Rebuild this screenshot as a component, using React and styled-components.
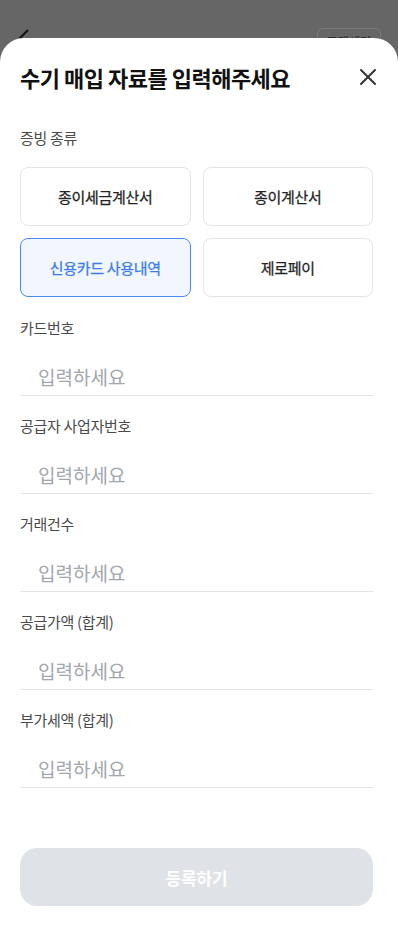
import React, { useState } from 'react';
import styled, { createGlobalStyle } from 'styled-components';

const GlobalStyle = createGlobalStyle`
  * { box-sizing: border-box; }
  body {
    margin: 0;
    font-family: "Noto Sans CJK KR", "Noto Sans", sans-serif;
    background: #666;
  }
`;

const Screen = styled.div`
  width: 398px;
  height: 946px;
  display: flex;
  flex-direction: column;
  background: #666666;
  overflow: hidden;
`;

const BackBar = styled.div`
  height: 38px;
  flex-shrink: 0;
  display: flex;
  justify-content: space-between;
  align-items: flex-start;
  padding: 28px 17px 0 18px;
  overflow: hidden;
`;

const HelpButton = styled.div`
  height: 28px;
  padding: 0 9px;
  border: 1px solid #7a7a7a;
  border-radius: 6px;
  font-size: 12px;
  font-weight: 500;
  line-height: 26px;
  color: #2a2a2a;
`;

const Sheet = styled.div`
  flex: 1;
  display: flex;
  flex-direction: column;
  background: #fff;
  border-radius: 24px 24px 0 0;
  padding: 24px 25px 40px 20px;
`;

const TitleRow = styled.div`
  display: flex;
  justify-content: space-between;
  align-items: center;
  height: 30px;
`;

const Title = styled.h1`
  margin: 0;
  font-size: 22px;
  font-weight: 700;
  letter-spacing: -0.5px;
  line-height: 30px;
  color: #111;
`;

const CloseButton = styled.button`
  width: 24px;
  height: 24px;
  padding: 0;
  margin-right: -7px;
  border: none;
  background: none;
  display: flex;
  align-items: center;
  justify-content: center;
`;

const Label = styled.div`
  margin-top: ${(p) => p.$top}px;
  font-size: 15px;
  line-height: 22px;
  letter-spacing: -0.3px;
  color: #4a4a4a;
`;

const OptionGrid = styled.div`
  display: grid;
  grid-template-columns: 1fr 1fr;
  gap: 12px;
  margin-top: 18px;
`;

const Option = styled.button`
  height: 59px;
  border-radius: 8px;
  border: 1px solid ${(p) => (p.$active ? '#4a8af4' : '#e3e5e9')};
  background: ${(p) => (p.$active ? '#f2f7ff' : '#fff')};
  color: ${(p) => (p.$active ? '#3a7bec' : '#222')};
  font-family: inherit;
  font-size: 15px;
  font-weight: 400;
  -webkit-text-stroke: 0.25px currentColor;
  letter-spacing: -0.3px;
  cursor: pointer;
`;

const Field = styled.div`
  display: flex;
  flex-direction: column;
  margin-top: ${(p) => p.$top}px;
`;

const Input = styled.input`
  margin-top: 16px;
  height: 41px;
  border: none;
  border-bottom: 1px solid #e3e5e9;
  padding: 2px 0 0 18px;
  font-family: inherit;
  font-size: 19px;
  color: #222;
  outline: none;
  &::placeholder {
    color: #a2a6ad;
  }
`;

const Submit = styled.button`
  margin-top: auto;
  height: 58px;
  border: none;
  border-radius: 17px;
  background: #dfe2e6;
  color: #fff;
  font-family: inherit;
  font-size: 17px;
  font-weight: 700;
  letter-spacing: -0.2px;
`;

const options = ['종이세금계산서', '종이계산서', '신용카드 사용내역', '제로페이'];
const fields = ['카드번호', '공급자 사업자번호', '거래건수', '공급가액 (합계)', '부가세액 (합계)'];

export default function App() {
  const [selected, setSelected] = useState('신용카드 사용내역');

  return (
    <Screen>
      <GlobalStyle />
      <BackBar>
        <svg width="14" height="20" viewBox="0 0 14 20">
          <path d="M10 2 L2 10 L10 18" fill="none" stroke="#111" strokeWidth="2" />
        </svg>
        <HelpButton>고객센터</HelpButton>
      </BackBar>
      <Sheet>
        <TitleRow>
          <Title>수기 매입 자료를 입력해주세요</Title>
          <CloseButton aria-label="닫기">
            <svg width="18" height="18" viewBox="0 0 18 18">
              <path d="M2 2 L16 16 M16 2 L2 16" stroke="#333" strokeWidth="2" strokeLinecap="round" />
            </svg>
          </CloseButton>
        </TitleRow>
        <Label $top={35}>증빙 종류</Label>
        <OptionGrid>
          {options.map((o) => (
            <Option key={o} $active={selected === o} onClick={() => setSelected(o)}>
              {o}
            </Option>
          ))}
        </OptionGrid>
        {fields.map((f, i) => (
          <Field key={f} $top={i === 0 ? 20 : 19}>
            <Label $top={0}>{f}</Label>
            <Input placeholder="입력하세요" />
          </Field>
        ))}
        <Submit disabled>등록하기</Submit>
      </Sheet>
    </Screen>
  );
}
